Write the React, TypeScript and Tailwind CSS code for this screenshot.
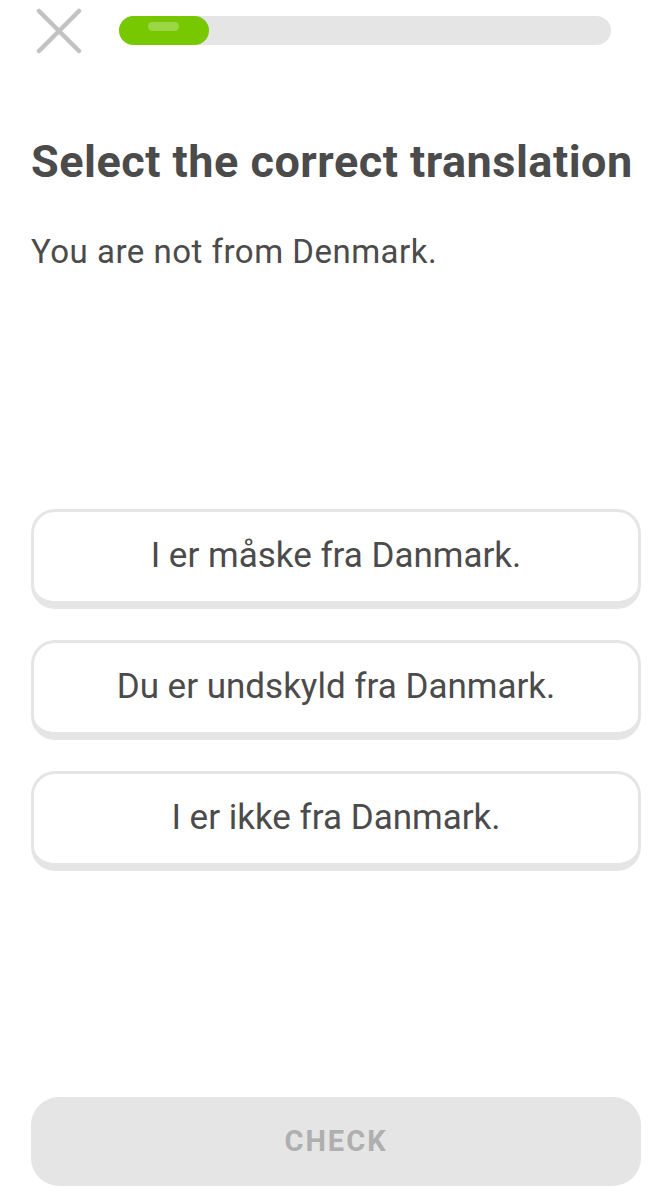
import React from 'react';

const options = ['I er måske fra Danmark.', 'Du er undskyld fra Danmark.', 'I er ikke fra Danmark.'];

const App: React.FC = () => {
  return (
    <div className="flex h-[1200px] w-full flex-col bg-white px-[31px] font-['Roboto',sans-serif] text-[#4b4b4b]">
      {/* Header: close + progress */}
      <div className="flex h-[60px] items-center pt-[1px]">
        <button className="ml-[5px] flex h-[46px] w-[46px] items-center justify-center">
          <svg width="46" height="46" viewBox="0 0 46 46" fill="none">
            <path d="M3 3L43 43M43 3L3 43" stroke="#c2c2c2" strokeWidth="4.5" strokeLinecap="round" />
          </svg>
        </button>
        <div className="ml-[37px] mr-[30px] h-[29px] flex-1 rounded-full bg-[#e5e5e5]">
          <div className="relative h-full w-[90px] rounded-full bg-[#78c800]">
            <div className="absolute left-[29px] top-[6px] h-[9px] w-[31px] rounded-full bg-[#9ad645]" />
          </div>
        </div>
      </div>

      {/* Prompt */}
      <h1 className="mt-[76px] text-[45px] font-bold leading-[52px] tracking-[0.5px]">
        Select the correct translation
      </h1>
      <p className="mt-[44px] text-[33px] leading-[40px] tracking-[0.5px]">You are not from Denmark.</p>

      {/* Choices */}
      <div className="mt-[237px] flex flex-col gap-[31px]">
        {options.map((o) => (
          <button
            key={o}
            className="flex h-[100px] w-full items-center justify-center rounded-[24px] border-[3px] border-b-[8px] border-[#e5e5e5] bg-white text-[35px] text-[#4b4b4b]"
          >
            {o}
          </button>
        ))}
      </div>

      <div className="flex-1" />

      {/* Check */}
      <button className="mb-[14px] flex h-[89px] w-full items-center justify-center rounded-[28px] bg-[#e5e5e5] text-[29px] font-bold tracking-[2px] text-[#afafaf]">
        CHECK
      </button>
    </div>
  );
};

export default App;
